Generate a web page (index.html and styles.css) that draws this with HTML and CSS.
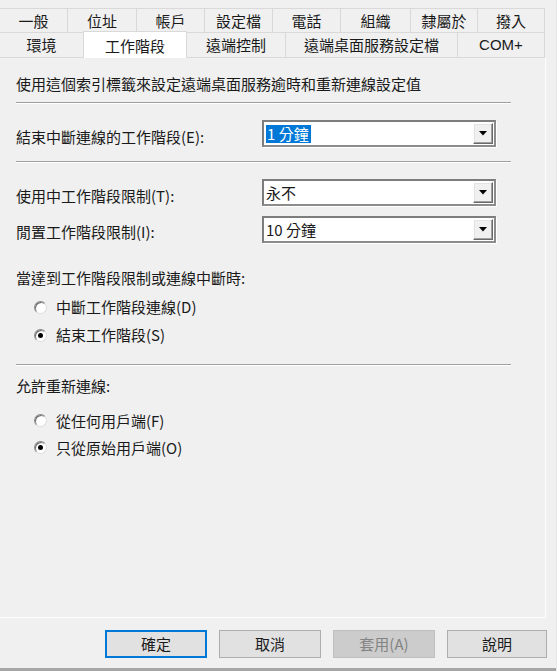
FILE: index.html
```html
<!DOCTYPE html>
<html lang="zh-Hant">
<head>
<meta charset="utf-8">
<title>內容</title>
<link rel="stylesheet" href="styles.css">
</head>
<body>
<div class="dialog">
  <div class="tabs">
    <div class="tabrow row1">
      <div class="tab w68">一般</div>
      <div class="tab w69">位址</div>
      <div class="tab w68">帳戶</div>
      <div class="tab w68">設定檔</div>
      <div class="tab w68">電話</div>
      <div class="tab w70">組織</div>
      <div class="tab w67">隸屬於</div>
      <div class="tab w67">撥入</div>
    </div>
    <div class="tabrow row2">
      <div class="tab w84">環境</div>
      <div class="tab w103 active">工作階段</div>
      <div class="tab w99">遠端控制</div>
      <div class="tab w172">遠端桌面服務設定檔</div>
      <div class="tab w87 latin">COM+</div>
    </div>
  </div>

  <div class="page">
    <p class="desc">使用這個索引標籤來設定遠端桌面服務逾時和重新連線設定值</p>
    <div class="sep"></div>

    <div class="field field-first">
      <span class="label">結束中斷連線的工作階段(E):</span>
      <div class="combo">
        <span class="value"><span class="selected">1 分鐘</span></span>
        <span class="dropbtn"><svg width="8" height="5" viewBox="0 0 8 5"><path d="M0 0H8L4 4.5Z" fill="#000"/></svg></span>
      </div>
    </div>
    <div class="sep sep2"></div>

    <div class="field field-second">
      <span class="label">使用中工作階段限制(T):</span>
      <div class="combo">
        <span class="value">永不</span>
        <span class="dropbtn"><svg width="8" height="5" viewBox="0 0 8 5"><path d="M0 0H8L4 4.5Z" fill="#000"/></svg></span>
      </div>
    </div>
    <div class="field field-third">
      <span class="label">閒置工作階段限制(I):</span>
      <div class="combo">
        <span class="value">10 分鐘</span>
        <span class="dropbtn"><svg width="8" height="5" viewBox="0 0 8 5"><path d="M0 0H8L4 4.5Z" fill="#000"/></svg></span>
      </div>
    </div>

    <p class="group-title gt1">當達到工作階段限制或連線中斷時:</p>
    <div class="radios">
      <div class="radio"><span class="dot"></span><span>中斷工作階段連線(D)</span></div>
      <div class="radio"><span class="dot checked"></span><span>結束工作階段(S)</span></div>
    </div>
    <div class="sep sep3"></div>

    <p class="group-title gt2">允許重新連線:</p>
    <div class="radios radios2">
      <div class="radio"><span class="dot"></span><span>從任何用戶端(F)</span></div>
      <div class="radio"><span class="dot checked"></span><span>只從原始用戶端(O)</span></div>
    </div>
  </div>

  <div class="buttons">
    <button class="btn default">確定</button>
    <button class="btn">取消</button>
    <button class="btn disabled">套用(A)</button>
    <button class="btn help">說明</button>
  </div>
  <div class="bottom-edge"></div>
</div>
</body>
</html>
```

FILE: styles.css
```css
* { box-sizing: border-box; }

html, body {
  margin: 0;
  padding: 0;
  background: #f0f0f0;
}

body {
  width: 557px;
  height: 671px;
  overflow: hidden;
  font-family: "Noto Sans CJK TC", "Noto Sans", sans-serif;
  font-size: 15px;
  color: #1a1a1a;
}

.dialog {
  width: 557px;
  height: 671px;
  display: flex;
  flex-direction: column;
  border-right: 1px solid #e6e6e6;
}

/* tabs */
.tabs {
  padding-top: 8px;
  margin-left: -1px;
}

.tabrow {
  display: flex;
}

.row1 { height: 24px; }
.row2 { height: 25px; }

.tab {
  flex: none;
  border: 1px solid #d9d9d9;
  border-bottom: none;
  margin-right: -1px;
  display: flex;
  align-items: center;
  justify-content: center;
  font-size: 15px;
  line-height: 20px;
  color: #1a1a1a;
  background: #f0f0f0;
}

.tab.active {
  background: #fff;
  height: 27px;
  margin-top: -1px;
  position: relative;
  z-index: 1;
  padding-top: 1px;
}

.w67 { width: 68px; }
.w68 { width: 69px; }
.w69 { width: 70px; }
.w70 { width: 71px; }
.w84 { width: 85px; }
.w87 { width: 88px; }
.w99 { width: 100px; }
.w103 { width: 104px; }
.w172 { width: 173px; }

.latin { font-family: "Liberation Sans", "Noto Sans CJK TC", sans-serif; }

/* page */
.page {
  width: 547px;
  height: 561px;
  margin-left: -1px;
  border: 1px solid #d9d9d9;
  border-right-color: #fdfdfd;
  border-bottom-color: #fdfdfd;
  padding: 16px 0 0 16px;
  background: #f0f0f0;
}

.desc {
  margin: 0;
  line-height: 20px;
}

.sep {
  width: 495px;
  height: 2px;
  border-top: 1px solid #a0a0a0;
  border-bottom: 1px solid #ffffff;
  margin-top: 8px;
}

.field {
  display: flex;
  align-items: flex-start;
}

.label {
  width: 246px;
  flex: none;
  line-height: 20px;
}

.field-first { margin-top: 16px; }
.field-first .label { padding-top: 7px; }
.sep2 { margin-top: 14px; }
.field-second { margin-top: 16px; }
.field-second .label { padding-top: 7px; }
.field-third { margin-top: 10px; }
.field-third .label { padding-top: 6px; }

.combo {
  width: 234px;
  height: 27px;
  display: flex;
  background: #fff;
  border: 2px solid;
  border-color: #7d7d7d #8c8c8c #8c8c8c #7d7d7d;
  box-shadow: 1px 1px 0 #ffffff;
  padding: 1px 1px 1px 2px;
}

.value {
  flex: 1;
  line-height: 21px;
  display: flex;
  align-items: center;
}

.selected {
  background: #0078d7;
  color: #fff;
  line-height: 18px;
  padding: 0 2px 0 1px;
}

.dropbtn {
  flex: none;
  width: 20px;
  height: 21px;
  background: #f0f0f0;
  border: 1px solid;
  border-color: #ffffff #696969 #696969 #ffffff;
  box-shadow: inset -1px -1px 0 #a0a0a0, inset 1px 1px 0 #e3e3e3;
  display: flex;
  align-items: center;
  justify-content: center;
}

.group-title {
  margin: 0;
  line-height: 20px;
}

.gt1 { margin-top: 25px; }
.gt2 { margin-top: 10px; }

.radios {
  padding-left: 18px;
  margin-top: 5px;
}

.radios2 { margin-top: 11px; }

.radio {
  height: 28px;
  display: flex;
  align-items: center;
  gap: 9px;
  line-height: 20px;
}

.radios2 .radio { height: 27px; }

.dot {
  width: 13px;
  height: 13px;
  border-radius: 50%;
  background: #fff;
  border: 1px solid;
  border-color: #8a8a8a #dcdcdc #dcdcdc #8a8a8a;
  box-shadow: inset 1px 1px 0 #6e6e6e;
  flex: none;
  display: flex;
  align-items: center;
  justify-content: center;
}

.dot.checked::after {
  content: "";
  width: 5px;
  height: 5px;
  border-radius: 50%;
  background: #000;
}

.sep3 { margin-top: 15px; }

/* buttons */
.buttons {
  display: flex;
  gap: 12px;
  padding-left: 105px;
  margin-top: 12px;
}

.btn {
  width: 102px;
  height: 28px;
  background: #e1e1e1;
  border: 1px solid #adadad;
  font-family: "Noto Sans CJK TC", "Noto Sans", sans-serif;
  font-size: 15px;
  color: #1a1a1a;
  padding: 0;
  line-height: 20px;
}

.btn.default {
  border: 2px solid #0078d7;
}

.btn.disabled {
  background: #cccccc;
  border-color: #bfbfbf;
  color: #838383;
}

.btn.help { width: 100px; }

.bottom-edge {
  margin-top: auto;
  height: 3px;
  background: #a6a6a6;
}
```
